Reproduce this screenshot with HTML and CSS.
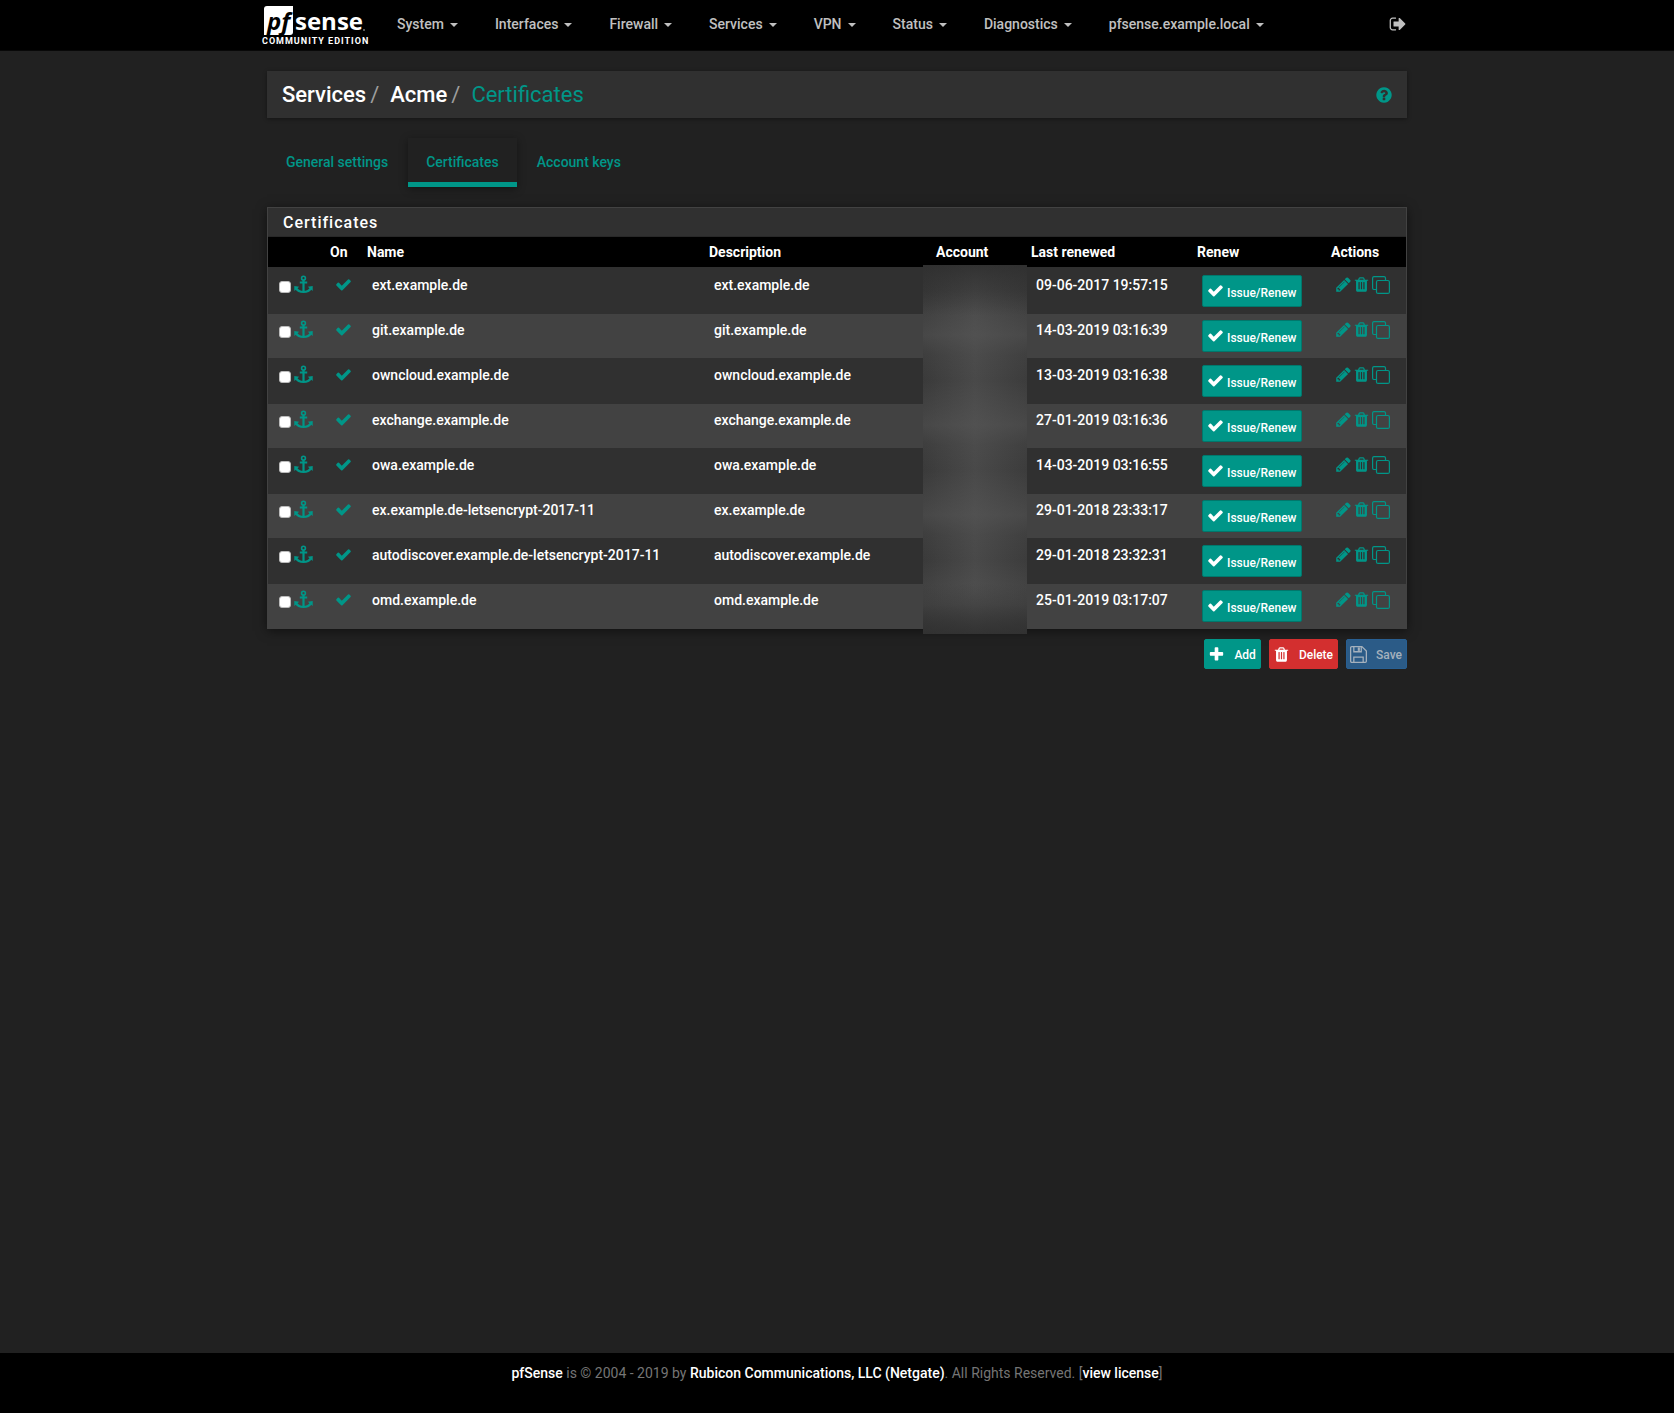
FILE: index.html
```html
<!DOCTYPE html>
<html lang="en">
<head>
<meta charset="utf-8">
<meta name="viewport" content="width=device-width, initial-scale=1">
<title>pfsense.example.local - Services: Acme: Certificates</title>
<link rel="stylesheet" href="styles.css">
</head>
<body>
<svg class="sprite" aria-hidden="true">
  <symbol id="check" viewBox="0 0 1792 1792"><path d="M1671 566q0 40-28 68l-724 724-136 136q-28 28-68 28t-68-28l-136-136-362-362q-28-28-28-68t28-68l136-136q28-28 68-28t68 28l294 295 656-657q28-28 68-28t68 28l136 136q28 28 28 68z"/></symbol>
  <symbol id="plus" viewBox="0 0 1792 1792"><path d="M1600 736v192q0 40-28 68t-68 28h-416v416q0 40-28 68t-68 28h-192q-40 0-68-28t-28-68v-416h-416q-40 0-68-28t-28-68v-192q0-40 28-68t68-28h416v-416q0-40 28-68t68-28h192q40 0 68 28t28 68v416h416q40 0 68 28t28 68z"/></symbol>
  <symbol id="pencil" viewBox="0 0 1792 1792"><path d="M491 1536l91-91-235-235-91 91v107h128v128h107zm523-928q0-22-22-22-10 0-17 7l-542 542q-7 7-7 17 0 22 22 22 10 0 17-7l542-542q7-7 7-17zm-54-192l416 416-832 832h-416v-416zm683 96q0 53-37 90l-166 166-416-416 166-165q36-38 90-38 53 0 91 38l235 234q37 39 37 91z"/></symbol>
  <symbol id="trash" viewBox="0 0 1792 1792"><path d="M704 1376v-704q0-14-9-23t-23-9h-64q-14 0-23 9t-9 23v704q0 14 9 23t23 9h64q14 0 23-9t9-23zm256 0v-704q0-14-9-23t-23-9h-64q-14 0-23 9t-9 23v704q0 14 9 23t23 9h64q14 0 23-9t9-23zm256 0v-704q0-14-9-23t-23-9h-64q-14 0-23 9t-9 23v704q0 14 9 23t23 9h64q14 0 23-9t9-23zm-544-992h448l-48-117q-7-9-17-11h-317q-10 2-17 11zm928 32v64q0 14-9 23t-23 9h-96v948q0 83-47 143.5t-113 60.5h-832q-66 0-113-58.5t-47-141.5v-952h-96q-14 0-23-9t-9-23v-64q0-14 9-23t23-9h309l70-167q15-37 54-63t79-26h320q40 0 79 26t54 63l70 167h309q14 0 23 9t9 23z"/></symbol>
  <symbol id="question" viewBox="0 0 1792 1792"><path d="M1024 1376v-192q0-14-9-23t-23-9h-192q-14 0-23 9t-9 23v192q0 14 9 23t23 9h192q14 0 23-9t9-23zm256-672q0-88-55.500-163t-138.500-116-170-41q-243 0-371 213-15 24 8 42l132 100q7 6 19 6 16 0 25-12 53-68 86-92 34-24 86-24 48 0 85.500 26t37.500 59q0 38-20 61t-68 45q-63 28-115.500 86.500t-52.500 125.500v36q0 14 9 23t23 9h192q14 0 23-9t9-23q0-19 21.500-49.500t54.500-49.500q32-18 49-28.500t46-35 44.500-48 28-60.500 12.500-81zm384 192q0 209-103 385.500t-279.500 279.500-385.500 103-385.500-103-279.500-279.500-103-385.500 103-385.500 279.500-279.500 385.500-103 385.500 103 279.500 279.500 103 385.500z"/></symbol>
  <symbol id="sign-out" viewBox="0 0 1792 1792"><path d="M704 1440q0 4 1 20t.5 26.500-3 23.500-10 19.500-20.500 6.500h-320q-119 0-203.500-84.500t-84.500-203.500v-704q0-119 84.500-203.500t203.500-84.500h320q13 0 22.500 9.500t9.500 22.500q0 4 1 20t.5 26.500-3 23.500-10 19.500-20.500 6.500h-320q-66 0-113 47t-47 113v704q0 66 47 113t113 47h312l11.500 1 11.500 3 8 5.500 7 9 2 13.500zm928-544q0 26-19 45l-544 544q-19 19-45 19t-45-19-19-45v-288h-448q-26 0-45-19t-19-45v-384q0-26 19-45t45-19h448v-288q0-26 19-45t45-19 45 19l544 544q19 19 19 45z"/></symbol>
  <symbol id="anchor" viewBox="0 0 19 19"><g fill="none" stroke="currentColor"><circle cx="9.500" cy="3.200" r="1.900" stroke-width="1.600"/><path d="M9.500 5v11.500M5.800 7.500h7.400" stroke-width="2.200"/><path d="M2.200 13.200c1.200 2.400 4 3.700 7.300 3.700s6.100-1.300 7.300-3.700" stroke-width="2.200"/></g><path d="M.3 11v5l4.900-4.200zM18.700 11v5l-4.900-4.200z"/></symbol>
  <symbol id="clone" viewBox="0 0 18 18"><g fill="none" stroke="currentColor" stroke-width="1.200"><rect x="4.500" y="4.500" width="12.900" height="12.900" rx="1.500"/><path d="M4 13.500H2A1.500 1.500 0 0 1 .6 12V2A1.500 1.500 0 0 1 2 .6h10A1.500 1.500 0 0 1 13.500 2v2"/></g></symbol>
  <symbol id="floppy" viewBox="0 0 16 16"><g fill="none" stroke="currentColor" stroke-width="1.200"><path d="M1.600.6h9.600l4.200 4.200v9.600a1 1 0 0 1-1 1H1.600a1 1 0 0 1-1-1V1.600a1 1 0 0 1 1-1z"/><path d="M3.600.6v4.800h7V.6M3.600 15.400v-5h8.800v5"/></g><path d="M7.300 1.300h2v3.300h-2z"/></symbol>
</svg>

<header class="navbar">
  <div class="container nav-inner">
    <a class="brand" href="#" aria-label="pfSense Community Edition">
      <span class="brand-top"><span class="brand-box">pf</span><span class="brand-name">sense</span><span class="brand-dot"></span></span>
      <span class="brand-sub">COMMUNITY EDITION</span>
    </a>
    <nav class="menu">
      <a href="#">System<span class="caret"></span></a>
      <a href="#">Interfaces<span class="caret"></span></a>
      <a href="#">Firewall<span class="caret"></span></a>
      <a href="#">Services<span class="caret"></span></a>
      <a href="#">VPN<span class="caret"></span></a>
      <a href="#">Status<span class="caret"></span></a>
      <a href="#">Diagnostics<span class="caret"></span></a>
      <a href="#">pfsense.example.local<span class="caret"></span></a>
    </nav>
    <a class="logout" href="#" aria-label="Logout"><svg class="icon-lg"><use href="#sign-out"/></svg></a>
  </div>
</header>

<main class="container content">
  <div class="page-header">
    <h1 class="crumbs"><a href="#">Services</a><span class="slash">/</span><a href="#">Acme</a><span class="slash">/</span><a class="current" href="#">Certificates</a></h1>
    <a class="help" href="#" aria-label="Help"><svg class="icon-lg"><use href="#question"/></svg></a>
  </div>

  <nav class="tabs">
    <a href="#">General settings</a>
    <a class="active" href="#">Certificates</a>
    <a href="#">Account keys</a>
  </nav>

  <form>
    <section class="panel">
      <h2 class="panel-title">Certificates</h2>
      <table class="certs">
        <colgroup><col class="c-select"><col class="c-on"><col><col class="c-desc"><col class="c-account"><col class="c-date"><col class="c-renew"><col class="c-actions"></colgroup>
        <thead>
          <tr><th></th><th>On</th><th>Name</th><th>Description</th><th>Account</th><th>Last renewed</th><th>Renew</th><th>Actions</th></tr>
        </thead>
        <tbody>
          <tr>
            <td><div class="select"><input type="checkbox" aria-label="Select ext.example.de"><a href="#" aria-label="Move"><svg class="anchor"><use href="#anchor"/></svg></a></div></td>
            <td><svg class="icon on"><use href="#check"/></svg></td>
            <td>ext.example.de</td><td>ext.example.de</td>
            <td class="account" rowspan="8"><div class="redacted"></div></td>
            <td>09-06-2017 19:57:15</td>
            <td><button class="btn renew" type="button"><svg class="icon"><use href="#check"/></svg>Issue/Renew</button></td>
            <td><div class="actions"><a href="#" aria-label="Edit"><svg class="icon"><use href="#pencil"/></svg></a><a href="#" aria-label="Delete"><svg class="icon"><use href="#trash"/></svg></a><a href="#" aria-label="Copy"><svg class="clone"><use href="#clone"/></svg></a></div></td>
          </tr>
          <tr>
            <td><div class="select"><input type="checkbox" aria-label="Select git.example.de"><a href="#" aria-label="Move"><svg class="anchor"><use href="#anchor"/></svg></a></div></td>
            <td><svg class="icon on"><use href="#check"/></svg></td>
            <td>git.example.de</td><td>git.example.de</td>
            <td>14-03-2019 03:16:39</td>
            <td><button class="btn renew" type="button"><svg class="icon"><use href="#check"/></svg>Issue/Renew</button></td>
            <td><div class="actions"><a href="#" aria-label="Edit"><svg class="icon"><use href="#pencil"/></svg></a><a href="#" aria-label="Delete"><svg class="icon"><use href="#trash"/></svg></a><a href="#" aria-label="Copy"><svg class="clone"><use href="#clone"/></svg></a></div></td>
          </tr>
          <tr>
            <td><div class="select"><input type="checkbox" aria-label="Select owncloud.example.de"><a href="#" aria-label="Move"><svg class="anchor"><use href="#anchor"/></svg></a></div></td>
            <td><svg class="icon on"><use href="#check"/></svg></td>
            <td>owncloud.example.de</td><td>owncloud.example.de</td>
            <td>13-03-2019 03:16:38</td>
            <td><button class="btn renew" type="button"><svg class="icon"><use href="#check"/></svg>Issue/Renew</button></td>
            <td><div class="actions"><a href="#" aria-label="Edit"><svg class="icon"><use href="#pencil"/></svg></a><a href="#" aria-label="Delete"><svg class="icon"><use href="#trash"/></svg></a><a href="#" aria-label="Copy"><svg class="clone"><use href="#clone"/></svg></a></div></td>
          </tr>
          <tr>
            <td><div class="select"><input type="checkbox" aria-label="Select exchange.example.de"><a href="#" aria-label="Move"><svg class="anchor"><use href="#anchor"/></svg></a></div></td>
            <td><svg class="icon on"><use href="#check"/></svg></td>
            <td>exchange.example.de</td><td>exchange.example.de</td>
            <td>27-01-2019 03:16:36</td>
            <td><button class="btn renew" type="button"><svg class="icon"><use href="#check"/></svg>Issue/Renew</button></td>
            <td><div class="actions"><a href="#" aria-label="Edit"><svg class="icon"><use href="#pencil"/></svg></a><a href="#" aria-label="Delete"><svg class="icon"><use href="#trash"/></svg></a><a href="#" aria-label="Copy"><svg class="clone"><use href="#clone"/></svg></a></div></td>
          </tr>
          <tr>
            <td><div class="select"><input type="checkbox" aria-label="Select owa.example.de"><a href="#" aria-label="Move"><svg class="anchor"><use href="#anchor"/></svg></a></div></td>
            <td><svg class="icon on"><use href="#check"/></svg></td>
            <td>owa.example.de</td><td>owa.example.de</td>
            <td>14-03-2019 03:16:55</td>
            <td><button class="btn renew" type="button"><svg class="icon"><use href="#check"/></svg>Issue/Renew</button></td>
            <td><div class="actions"><a href="#" aria-label="Edit"><svg class="icon"><use href="#pencil"/></svg></a><a href="#" aria-label="Delete"><svg class="icon"><use href="#trash"/></svg></a><a href="#" aria-label="Copy"><svg class="clone"><use href="#clone"/></svg></a></div></td>
          </tr>
          <tr>
            <td><div class="select"><input type="checkbox" aria-label="Select ex.example.de-letsencrypt-2017-11"><a href="#" aria-label="Move"><svg class="anchor"><use href="#anchor"/></svg></a></div></td>
            <td><svg class="icon on"><use href="#check"/></svg></td>
            <td>ex.example.de-letsencrypt-2017-11</td><td>ex.example.de</td>
            <td>29-01-2018 23:33:17</td>
            <td><button class="btn renew" type="button"><svg class="icon"><use href="#check"/></svg>Issue/Renew</button></td>
            <td><div class="actions"><a href="#" aria-label="Edit"><svg class="icon"><use href="#pencil"/></svg></a><a href="#" aria-label="Delete"><svg class="icon"><use href="#trash"/></svg></a><a href="#" aria-label="Copy"><svg class="clone"><use href="#clone"/></svg></a></div></td>
          </tr>
          <tr>
            <td><div class="select"><input type="checkbox" aria-label="Select autodiscover.example.de-letsencrypt-2017-11"><a href="#" aria-label="Move"><svg class="anchor"><use href="#anchor"/></svg></a></div></td>
            <td><svg class="icon on"><use href="#check"/></svg></td>
            <td>autodiscover.example.de-letsencrypt-2017-11</td><td>autodiscover.example.de</td>
            <td>29-01-2018 23:32:31</td>
            <td><button class="btn renew" type="button"><svg class="icon"><use href="#check"/></svg>Issue/Renew</button></td>
            <td><div class="actions"><a href="#" aria-label="Edit"><svg class="icon"><use href="#pencil"/></svg></a><a href="#" aria-label="Delete"><svg class="icon"><use href="#trash"/></svg></a><a href="#" aria-label="Copy"><svg class="clone"><use href="#clone"/></svg></a></div></td>
          </tr>
          <tr>
            <td><div class="select"><input type="checkbox" aria-label="Select omd.example.de"><a href="#" aria-label="Move"><svg class="anchor"><use href="#anchor"/></svg></a></div></td>
            <td><svg class="icon on"><use href="#check"/></svg></td>
            <td>omd.example.de</td><td>omd.example.de</td>
            <td>25-01-2019 03:17:07</td>
            <td><button class="btn renew" type="button"><svg class="icon"><use href="#check"/></svg>Issue/Renew</button></td>
            <td><div class="actions"><a href="#" aria-label="Edit"><svg class="icon"><use href="#pencil"/></svg></a><a href="#" aria-label="Delete"><svg class="icon"><use href="#trash"/></svg></a><a href="#" aria-label="Copy"><svg class="clone"><use href="#clone"/></svg></a></div></td>
          </tr>
        </tbody>
      </table>
    </section>
    <div class="toolbar">
      <button class="btn tool" type="button"><svg class="icon"><use href="#plus"/></svg>Add</button>
      <button class="btn tool danger" type="button"><svg class="icon"><use href="#trash"/></svg>Delete</button>
      <button class="btn tool save" type="button" disabled><svg class="icon"><use href="#floppy"/></svg>Save</button>
    </div>
  </form>
</main>

<footer class="footer"><a href="#">pfSense</a> is © 2004 - 2019 by <a href="#">Rubicon Communications, LLC (Netgate)</a>. All Rights Reserved. [<a href="#">view license</a>]</footer>
</body>
</html>
```
FILE: styles.css
```css
:root {
  --teal: #009688;
  --teal-dark: #00786c;
  --page: #212121;
  --surface: #303030;
  --stripe: #424242;
  --nav-text: #c0c0c0;
}

* { box-sizing: border-box; }

body {
  display: flex;
  flex-direction: column;
  min-height: 100vh;
  margin: 0;
  background: var(--page);
  color: #fff;
  font: 500 14px/20px Roboto, "Liberation Sans", sans-serif;
}

a { color: inherit; text-decoration: none; }
svg { display: block; fill: currentColor; }
.sprite { position: absolute; width: 0; height: 0; }
.icon { width: 17px; height: 17px; }
.icon-lg { width: 18px; height: 18px; }

.container {
  width: 100%;
  max-width: 1170px;
  margin: 0 auto;
  padding: 0 15px;
}

.navbar { background: #000; border-bottom: 1px solid #080808; }
.nav-inner { display: flex; align-items: flex-start; height: 50px; }

.brand {
  width: 111px;
  margin-left: -5px;
  padding-top: 6px;
}
.brand-top { display: flex; align-items: flex-start; height: 29px; padding-left: 2px; }
.brand-box {
  width: 29px;
  height: 29px;
  border-radius: 3px 0 3px 0;
  background: #fff;
  color: #000;
  font: italic 700 24px/29px "Open Sans", sans-serif;
  text-align: center;
}
.brand-name { margin-left: 2px; font: 700 24px/29px "Open Sans", sans-serif; }
.brand-dot { align-self: flex-end; width: 2px; height: 2px; margin-bottom: 4px; border-radius: 50%; background: #777; }
.brand-sub { display: block; font: 700 9px/13px Roboto, sans-serif; letter-spacing: 1px; white-space: nowrap; }

.menu { display: flex; gap: 37px; margin-left: 24px; padding-top: 14px; color: var(--nav-text); }
.menu a { white-space: nowrap; }
.caret {
  display: inline-block;
  margin-left: 6px;
  border-top: 4px solid;
  border-right: 4px solid transparent;
  border-left: 4px solid transparent;
  vertical-align: middle;
}
.logout { margin-left: auto; padding-top: 15px; color: var(--nav-text); }

.content { flex: 1 0 auto; padding-top: 20px; }

.page-header {
  display: flex;
  align-items: center;
  justify-content: space-between;
  height: 47px;
  padding: 0 14px 0 15px;
  background: var(--surface);
  box-shadow: 0 1px 4px rgba(0, 0, 0, .4);
}
.crumbs { margin: 0; font-size: 22px; font-weight: 400; line-height: 30px; }
.crumbs a { font-weight: 500; }
.crumbs .current { color: var(--teal); font-weight: 400; }
.slash { margin: 0 11px 0 4px; color: #9e9e9e; }
.help { color: var(--teal); }

.tabs { display: flex; gap: 2px; margin: 20px 0 0 1px; color: var(--teal); }
.tabs a { padding: 14px 18px 10px; border-bottom: 5px solid transparent; }
.tabs .active { border-color: var(--teal); box-shadow: 0 2px 8px rgba(0, 0, 0, .4); }

.panel {
  margin-top: 20px;
  border: 1px solid #424242;
  background: var(--surface);
  box-shadow: 0 2px 10px rgba(0, 0, 0, .5);
}
.panel-title {
  margin: 0;
  padding: 5px 15px 3px;
  border-bottom: 1px solid #282828;
  font-size: 16px;
  font-weight: 500;
  line-height: 20px;
  letter-spacing: 1px;
}

.certs { width: 100%; border-collapse: separate; border-spacing: 0; table-layout: fixed; }
.c-select { width: 57px; }
.c-on { width: 37px; }
.c-desc { width: 227px; }
.c-account { width: 95px; }
.c-date { width: 166px; }
.c-renew { width: 134px; }
.c-actions { width: 80px; }
.certs th {
  height: 31px;
  padding: 5px;
  border-bottom: 1px solid var(--surface);
  background: #000;
  font-weight: 700;
  text-align: left;
}
.certs td { padding: 7px 0 7px 10px; vertical-align: top; }
.certs tr:nth-child(even) td { padding-top: 6px; padding-bottom: 6px; background: var(--stripe); }
.certs .account { position: relative; padding: 0; }
.redacted {
  position: absolute;
  inset: -3px -1px -6px -8px;
  background:
    linear-gradient(rgba(44, 44, 44, .8), transparent 50px, transparent calc(100% - 50px), rgba(48, 48, 48, .9)),
    repeating-linear-gradient(rgba(96, 96, 96, .1) 0, rgba(96, 96, 96, 0) 25px, rgba(96, 96, 96, .35) 70px, rgba(96, 96, 96, .1) 90px),
    linear-gradient(90deg, #3a3a3a, #494949 50%, #3c3c3c);
}

.select { display: flex; align-items: flex-start; gap: 3px; }
.select input {
  width: 12px;
  height: 12px;
  margin: 6px 0 0 1px;
  border: 1px solid #bbb;
  border-radius: 3px;
  background: #fff;
  appearance: none;
}
.anchor { width: 19px; height: 19px; color: var(--teal); }
.icon.on { margin-top: 1px; color: var(--teal); }

.actions { display: flex; align-items: flex-start; gap: 1px; margin-left: -1px; color: var(--teal); }
.actions .icon { margin-top: 1px; }
.actions .clone { width: 18px; height: 18px; margin: 1px 0 0 1px; }

.btn {
  display: inline-flex;
  align-items: center;
  border: 1px solid var(--teal-dark);
  border-radius: 2px;
  background: var(--teal);
  color: #fff;
  font: 500 12px/18px Roboto, "Liberation Sans", sans-serif;
  white-space: nowrap;
}
.renew { gap: 3px; height: 32px; padding: 3px 4px 0; vertical-align: top; }
.renew .icon { margin-bottom: 4px; }

.toolbar { display: flex; justify-content: flex-end; gap: 8px; margin-top: 10px; }
.tool { gap: 9px; height: 30px; padding: 1px 4px 0 3px; border-color: var(--teal); }
.danger { border-color: #d32f2f; background: #d32f2f; }
.save { border-color: #285f92; background: #2b5b87; color: #a5b1bd; }

.footer {
  height: 60px;
  padding-top: 10px;
  background: #000;
  color: #757575;
  font-weight: 400;
  text-align: center;
}
.footer a { color: #fff; font-weight: 500; }
```
